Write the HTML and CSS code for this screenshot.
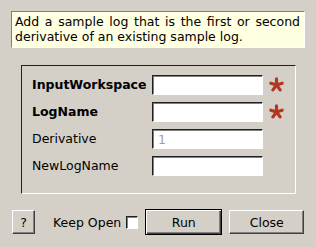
FILE: index.html
```html
<!DOCTYPE html>
<html lang="en">
<head>
    <meta charset="UTF-8">
    <title>Add Sample Log Derivative</title>
    <link rel="stylesheet" href="styles.css">
</head>
<body>
    <div class="dialog">
        <p class="desc">Add a sample log that is the first or second derivative of an existing sample log.</p>

        <div class="props">
            <label class="lbl bold" for="ws">InputWorkspace</label>
            <input class="field" id="ws" type="text">
            <svg class="star" viewBox="0 0 16 16"><g stroke="#b3361f" stroke-width="3.4" stroke-linecap="round"><line x1="8" y1="8.5" x2="8" y2="2"/><line x1="8" y1="8.5" x2="14" y2="6.6"/><line x1="8" y1="8.5" x2="2" y2="6.6"/><line x1="8" y1="8.5" x2="11.8" y2="13.7"/><line x1="8" y1="8.5" x2="4.2" y2="13.7"/></g></svg>

            <label class="lbl bold" for="log">LogName</label>
            <input class="field" id="log" type="text">
            <svg class="star" viewBox="0 0 16 16"><g stroke="#b3361f" stroke-width="3.4" stroke-linecap="round"><line x1="8" y1="8.5" x2="8" y2="2"/><line x1="8" y1="8.5" x2="14" y2="6.6"/><line x1="8" y1="8.5" x2="2" y2="6.6"/><line x1="8" y1="8.5" x2="11.8" y2="13.7"/><line x1="8" y1="8.5" x2="4.2" y2="13.7"/></g></svg>

            <label class="lbl" for="der">Derivative</label>
            <input class="field" id="der" type="text" placeholder="1">
            <span></span>

            <label class="lbl" for="new">NewLogName</label>
            <input class="field" id="new" type="text">
            <span></span>
        </div>

        <div class="buttons">
            <button class="btn help">?</button>
            <span class="keep">Keep Open</span>
            <span class="check"></span>
            <button class="btn run">Run</button>
            <button class="btn close">Close</button>
        </div>
    </div>
</body>
</html>
```

FILE: styles.css
```css
body {
    margin: 0;
    background-color: #d4d0c8;
    font-family: "DejaVu Sans", sans-serif;
    font-size: 12.5px;
    color: #000;
}
.dialog {
    display: flex;
    flex-direction: column;
    width: 316px;
    height: 247px;
}
.desc {
    margin: 11px 11px 0 11px;
    height: 37px;
    box-sizing: border-box;
    padding: 3px 4px 0 3px;
    line-height: 14.5px;
    text-align: justify;
    background-color: #ffffe1;
    border: 1px solid;
    border-color: #808080 #ffffff #ffffff #808080;
}
.props {
    margin: 17px 20px 0 21px;
    height: 129px;
    box-sizing: border-box;
    padding: 9px 0 0 10px;
    border: 1px solid;
    border-color: #202020 #ffffff #ffffff #202020;
    display: grid;
    grid-template-columns: 114px 111px 15px;
    grid-auto-rows: 20px;
    column-gap: 6px;
    row-gap: 7px;
    align-items: center;
}
.lbl {
    line-height: 20px;
    white-space: nowrap;
}
.bold {
    font-weight: bold;
}
.field {
    width: 111px;
    height: 20px;
    box-sizing: border-box;
    margin: 0;
    padding: 0 5px;
    font-family: inherit;
    font-size: 12.5px;
    background: #fff;
    border: 1px solid;
    border-color: #202020 #ffffff #ffffff #202020;
    box-shadow: inset 1px 1px #808080;
    outline: none;
}
.field::placeholder {
    color: #a0a0a0;
}
.star {
    width: 15px;
    height: 15px;
    margin-top: -1px;
}
.buttons {
    display: flex;
    align-items: center;
    margin-top: 15px;
    padding-left: 12px;
    height: 26px;
}
.btn {
    box-sizing: border-box;
    margin: 0;
    padding: 0;
    font-family: inherit;
    font-size: 12.5px;
    color: #000;
    background-color: #d4d0c8;
    border: 1px solid;
    border-color: #ffffff #404040 #404040 #ffffff;
    box-shadow: inset -1px -1px #808080;
    height: 24px;
}
.help {
    width: 23px;
}
.keep {
    margin-left: 18px;
    white-space: nowrap;
}
.check {
    width: 12px;
    height: 13px;
    box-sizing: border-box;
    margin-left: 5px;
    background: #fff;
    border: 1px solid;
    border-color: #202020 #ffffff #ffffff #202020;
    box-shadow: inset 1px 1px #808080;
}
.run {
    margin-left: 7px;
    width: 77px;
    height: 26px;
    border: 1px solid #000;
    box-shadow: inset 1px 1px #ffffff, inset -1px -1px #404040, inset -2px -2px #808080;
}
.close {
    margin-left: 7px;
    width: 75px;
}
```
